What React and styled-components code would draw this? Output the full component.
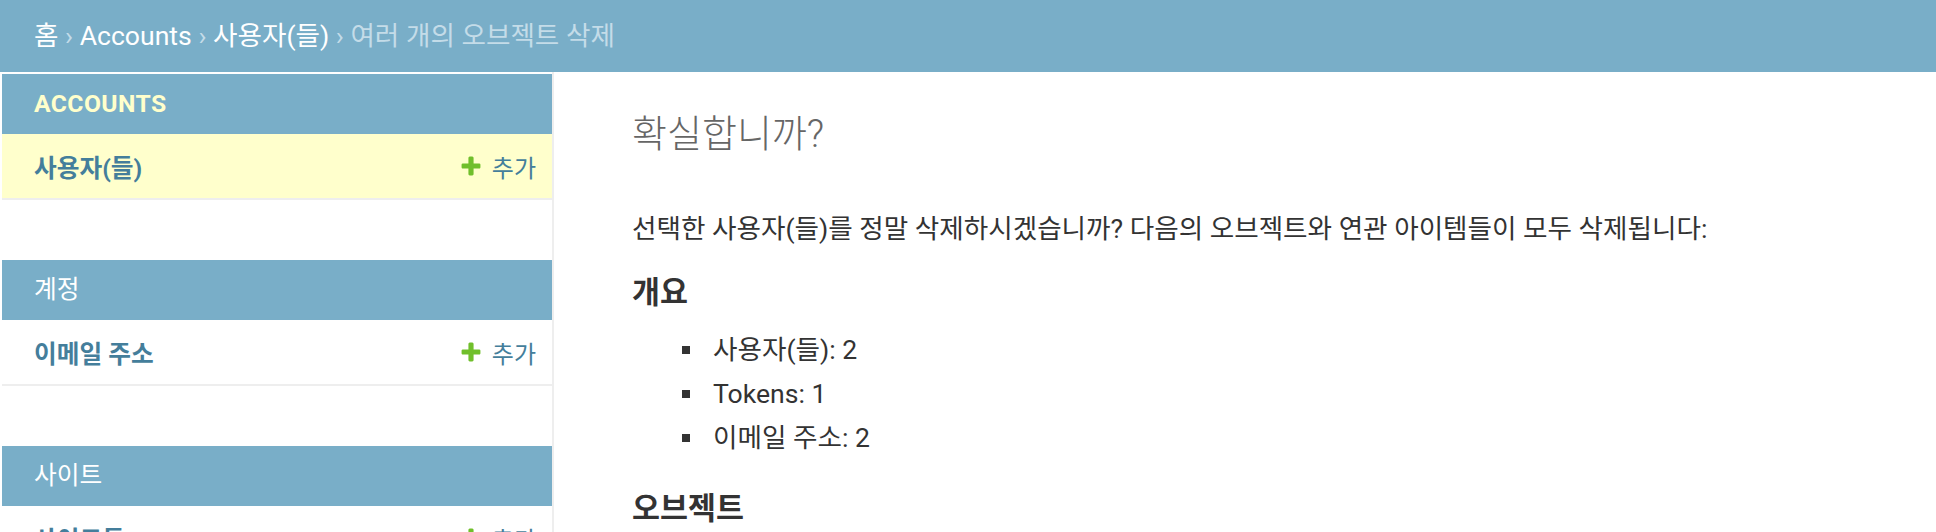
import styled, { createGlobalStyle } from "styled-components";

const GlobalStyle = createGlobalStyle`
  html, body {
    margin: 0;
    padding: 0;
    background: #fff;
  }
  body {
    font-family: Roboto, "Noto Sans CJK KR", sans-serif;
    color: #333;
  }
`;

const Breadcrumbs = styled.div`
  height: 72px;
  line-height: 72px;
  padding-left: 34px;
  background: #79aec8;
  color: #c4dce8;
  font-size: 26.6px;
  white-space: nowrap;
`;

const Crumb = styled.a`
  color: #fff;
  text-decoration: none;
`;

const Layout = styled.div`
  display: flex;
  min-height: 470px;
`;

const Sidebar = styled.nav`
  flex: 0 0 550px;
  padding: 2px 0 0 2px;
  border-right: 2px solid #eee;
`;

const Module = styled.div`
  margin-bottom: 60px;
`;

const Caption = styled.div`
  height: 60px;
  line-height: 60px;
  padding-left: 32px;
  background: #79aec8;
  color: ${(p) => (p.$current ? "#ffc" : "#fff")};
  font-weight: ${(p) => (p.$current ? 700 : 400)};
  letter-spacing: ${(p) => (p.$current ? "0.4px" : "0")};
  font-size: 24.7px;
`;

const Row = styled.div`
  display: flex;
  align-items: center;
  justify-content: space-between;
  height: 64px;
  padding: 0 16px 0 32px;
  background: ${(p) => (p.$current ? "#ffc" : "#fff")};
  border-bottom: 2px solid #eee;
  font-size: 24.7px;
`;

const ModelLink = styled.a`
  color: #447e9b;
  font-weight: 700;
  text-decoration: none;
`;

const AddLink = styled.a`
  display: flex;
  align-items: center;
  gap: 9px;
  color: #447e9b;
  font-size: 24px;
  text-decoration: none;
`;

const Main = styled.main`
  flex: 1;
  padding: 42px 76px 0 78px;
`;

const Title = styled.h1`
  margin: 0 0 57px;
  font-size: 38px;
  font-weight: 300;
  line-height: 40px;
  color: #666;
`;

const Text = styled.p`
  margin: 0 0 28px;
  font-size: 26.6px;
  line-height: 36px;
`;

const Heading = styled.h2`
  margin: 0 0 ${(p) => p.$gap}px;
  font-size: 30.4px;
  font-weight: 700;
  line-height: 36px;
`;

const List = styled.ul`
  margin: 0 0 31px;
  padding-left: 50px;
  list-style: none;
  font-size: 26.6px;
  line-height: 44px;
`;

const Item = styled.li`
  display: flex;
  align-items: center;

  &::before {
    content: "";
    flex: 0 0 8px;
    height: 8px;
    margin-right: 23px;
    background: #333;
  }
`;

const PlusIcon = () => (
  <svg width="24" height="24" viewBox="0 0 1792 1792">
    <path
      fill="#70bf2b"
      d="M1600 796v192q0 40-28 68t-68 28h-416v416q0 40-28 68t-68 28h-192q-40 0-68-28t-28-68v-416h-416q-40 0-68-28t-28-68v-192q0-40 28-68t68-28h416v-416q0-40 28-68t68-28h192q40 0 68 28t28 68v416h416q40 0 68 28t28 68z"
    />
  </svg>
);

const apps = [
  { name: "ACCOUNTS", current: true, models: [{ name: "사용자(들)", current: true }] },
  { name: "계정", models: [{ name: "이메일 주소" }] },
  { name: "사이트", models: [{ name: "사이트들" }] },
];

const App = () => {
  return (
    <>
      <GlobalStyle />
      <Breadcrumbs>
        <Crumb href="#">홈</Crumb>
        {" › "}
        <Crumb href="#">Accounts</Crumb>
        {" › "}
        <Crumb href="#">사용자(들)</Crumb>
        {" › "}
        여러 개의 오브젝트 삭제
      </Breadcrumbs>
      <Layout>
        <Sidebar>
          {apps.map((app) => (
            <Module key={app.name}>
              <Caption $current={app.current}>{app.name}</Caption>
              {app.models.map((m) => (
                <Row key={m.name} $current={m.current}>
                  <ModelLink href="#">{m.name}</ModelLink>
                  <AddLink href="#">
                    <PlusIcon />
                    추가
                  </AddLink>
                </Row>
              ))}
            </Module>
          ))}
        </Sidebar>
        <Main>
          <Title>확실합니까?</Title>
          <Text>
            선택한 사용자(들)를 정말 삭제하시겠습니까? 다음의 오브젝트와 연관 아이템들이 모두 삭제됩니다:
          </Text>
          <Heading $gap={17}>개요</Heading>
          <List>
            <Item>사용자(들): 2</Item>
            <Item>Tokens: 1</Item>
            <Item>이메일 주소: 2</Item>
          </List>
          <Heading $gap={0}>오브젝트</Heading>
        </Main>
      </Layout>
    </>
  );
};

export default App;
